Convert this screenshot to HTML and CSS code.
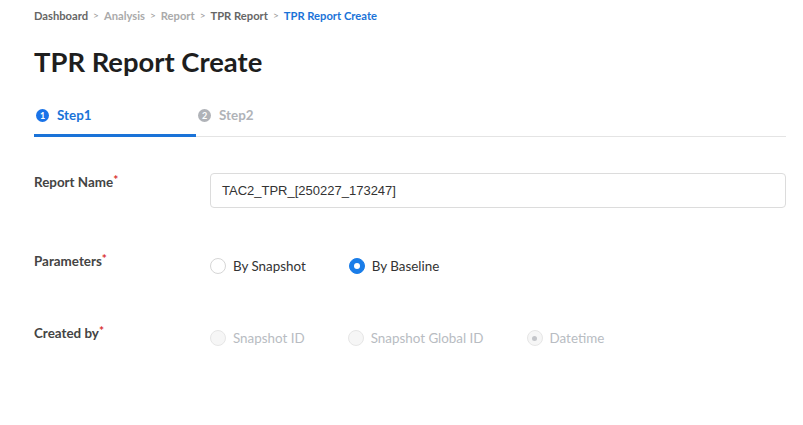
FILE: index.html
```html
<!DOCTYPE html>
<html>
<head>
<meta charset="utf-8">
<link rel="stylesheet" href="styles.css">
</head>
<body>
<div class="page">
  <nav class="crumbs">
    <span class="c-dark">Dashboard</span><span class="sep">&gt;</span>
    <span class="c-light">Analysis</span><span class="sep">&gt;</span>
    <span class="c-light">Report</span><span class="sep">&gt;</span>
    <span class="c-dark">TPR Report</span><span class="sep">&gt;</span>
    <span class="c-active">TPR Report Create</span>
  </nav>
  <h1 class="title">TPR Report Create</h1>
  <div class="tabs">
    <div class="tab active"><span class="num">1</span><span>Step1</span></div>
    <div class="tab"><span class="num">2</span><span>Step2</span></div>
  </div>
  <div class="form">
    <div class="row row-name">
      <div class="label">Report Name<span class="req">*</span></div>
      <div class="field"><div class="input">TAC2_TPR_[250227_173247]</div></div>
    </div>
    <div class="row row-params">
      <div class="label">Parameters<span class="req">*</span></div>
      <div class="field radios">
        <label class="radio"><span class="dot"></span><span>By Snapshot</span></label>
        <label class="radio"><span class="dot checked"></span><span>By Baseline</span></label>
      </div>
    </div>
    <div class="row row-created">
      <div class="label">Created by<span class="req">*</span></div>
      <div class="field radios disabled">
        <label class="radio"><span class="dot"></span><span>Snapshot ID</span></label>
        <label class="radio"><span class="dot"></span><span>Snapshot Global ID</span></label>
        <label class="radio"><span class="dot dis-checked"></span><span>Datetime</span></label>
      </div>
    </div>
  </div>
</div>
</body>
</html>
```
FILE: styles.css
```css
* { box-sizing: border-box; }
html, body { margin: 0; background: #fff; }
body { font-family: "Lato", "Noto Sans", sans-serif; color: #333; }
.page { padding: 0 17px 0 34px; }
.crumbs {
  display: flex; align-items: center; gap: 5px;
  height: 30px; font-size: 11.2px; font-weight: 700;
}
.c-dark { color: #666; }
.c-light { color: #aaa; }
.c-active { color: #1a73d8; }
.sep { color: #999; font-size: 10px; font-weight: 400; }
.title {
  margin: 17px 0 0; font-size: 27.4px; font-weight: 700; color: #1e1e1e;
  line-height: 30px;
}
.tabs {
  display: flex; margin-top: 30px; border-bottom: 1px solid #e4e4e4;
}
.tab {
  width: 162px; display: flex; align-items: center; gap: 8px;
  padding: 0 2px 11px; font-size: 13.4px; font-weight: 700; color: #b0b3b8;
  margin-bottom: -1px; border-bottom: 3px solid transparent;
}
.tab.active { color: #1a73d8; border-bottom-color: #1a73d8; }
.num {
  width: 13px; height: 13px; border-radius: 50%; background: #b0b3b8; color: #fff;
  font-size: 9px; display: flex; align-items: center; justify-content: center; line-height: 1;
}
.tab.active .num { background: #1a73e8; }
.form { display: flex; flex-direction: column; }
.row { display: flex; align-items: flex-start; }
.label {
  width: 176px; flex: none; font-size: 13.4px; font-weight: 700; color: #444;
}
.req { color: #d93030; font-size: 12px; font-weight: 700; vertical-align: top; line-height: 1; }
.field { flex: 1; }
.row-name { margin-top: 36px; }
.row-name .label { padding-top: 1px; }
.input {
  height: 35px; border: 1px solid #dcdcdc; border-radius: 4px; padding: 0 11px;
  display: flex; align-items: center; font-family: "Liberation Sans", Arial, sans-serif;
  font-size: 13px; color: #333;
}
.row-params { margin-top: 45px; }
.row-created { margin-top: 51px; }
.radios { display: flex; align-items: center; padding-top: 5px; }
.radio {
  display: flex; align-items: center; gap: 7px; margin-right: 43px;
  font-size: 13.4px; color: #333;
}
.dot {
  width: 16px; height: 16px; border-radius: 50%; border: 1px solid #d6d6d6;
  background: #fff; flex: none; display: flex; align-items: center; justify-content: center;
}
.dot.checked { background: #1a7de8; border-color: #1a7de8; }
.dot.checked::after {
  content: ""; width: 6px; height: 6px; border-radius: 50%; background: #fff;
}
.disabled .radio { color: #b8bcc2; }
.disabled .dot { background: #f6f6f6; border-color: #e6e6e6; }
.dot.dis-checked::after {
  content: ""; width: 5px; height: 5px; border-radius: 50%; background: #c4c6ca;
}
```
